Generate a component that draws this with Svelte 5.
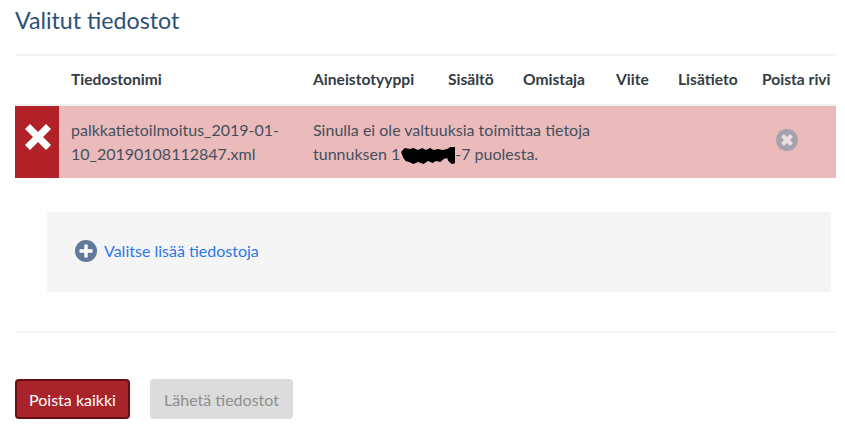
<script>
  const headers = ['', 'Tiedostonimi', 'Aineistotyyppi', 'Sisältö', 'Omistaja', 'Viite', 'Lisätieto', 'Poista rivi'];
</script>

<main class="page">
  <h2 class="title">Valitut tiedostot</h2>

  <section class="table">
    <div class="row head">
      {#each headers as h}
        <div class="th">{h}</div>
      {/each}
    </div>
    <div class="row error">
      <div class="status">
        <svg width="28" height="28" viewBox="0 0 28 28" aria-hidden="true">
          <path d="M1 6 6 1 14 9 22 1 27 6 19 14 27 22 22 27 14 19 6 27 1 22 9 14Z" fill="#fff" />
        </svg>
      </div>
      <div class="td">palkkatietoilmoitus_2019-01-10_20190108112847.xml</div>
      <div class="td message">
        Sinulla ei ole valtuuksia toimittaa tietoja<br />
        tunnuksen 1<span class="redact"><svg width="55" height="20" viewBox="0 0 49 20" preserveAspectRatio="none" aria-hidden="true"><path d="M1 7 4 3l5 1 3-1 4 2 4-2 3 2 4-2 3 2 4-1 4 1 4-1 3-2 5 0 1 4-2 3 2 4-1 5-4 1-3-3-1-3-3 1-3 3-4-1-3 2-4-2-4 3-5-2-4 2-4-2-3-1-2-3Z" fill="#000" /></svg></span>-7 puolesta.
      </div>
      <div class="remove">
        <svg width="22" height="22" viewBox="0 0 22 22" aria-hidden="true">
          <circle cx="11" cy="11" r="11" fill="#a5a2ae" />
          <path d="M6.500 6.500 15.500 15.500M15.500 6.500 6.500 15.500" stroke="#ecdfe2" stroke-width="4" />
        </svg>
      </div>
    </div>
  </section>

  <section class="drop">
    <svg width="22" height="22" viewBox="0 0 22 22" aria-hidden="true">
      <circle cx="11" cy="11" r="11" fill="#5f7a9a" />
      <path d="M11 4.500v13M4.500 11h13" stroke="#fff" stroke-width="3.400" />
    </svg>
    <a href="#add" class="add">Valitse lisää tiedostoja</a>
  </section>

  <hr class="rule" />

  <div class="actions">
    <button class="btn danger">Poista kaikki</button>
    <button class="btn disabled" disabled>Lähetä tiedostot</button>
  </div>
</main>

<style>
  :global(body) {
    margin: 0;
    background: #fff;
  }
  .page {
    width: 821px;
    padding: 0 9px 0 15px;
    font-family: Lato, "Open Sans", sans-serif;
    font-size: 16px;
    color: #3b4a56;
  }
  .title {
    margin: 0;
    padding-top: 6px;
    height: 54px;
    box-sizing: border-box;
    font-size: 23.2px;
    line-height: 28px;
    font-weight: 400;
    color: #2c5078;
  }
  .table {
    border-top: 2px solid #f3f3f3;
  }
  .row {
    display: grid;
    grid-template-columns: 44px 242px 135px 75px 93px 62px 84px 86px;
  }
  .head {
    height: 48px;
    align-items: center;
    border-bottom: 2px solid #f0f0f0;
    box-sizing: content-box;
    font-weight: 700;
    color: #333b44;
  }
  .th {
    padding: 0 0 2px 12px;
    white-space: nowrap;
    font-size: 15.6px;
  }
  .th:first-child {
    padding: 0;
  }
  .error {
    height: 72px;
    background: #ebbbbc;
    grid-template-columns: 44px 242px 449px 86px;
    align-items: center;
  }
  .status {
    background: #b12228;
    height: 100%;
    display: flex;
    align-items: center;
    justify-content: center;
    padding: 0 0 10px 1px;
    box-sizing: border-box;
  }
  .td {
    padding-left: 12px;
    line-height: 24px;
    overflow-wrap: anywhere;
    color: #454f5c;
  }
  .redact {
    display: inline-block;
    width: 55px;
    height: 20px;
    vertical-align: -5px;
  }
  .redact svg {
    display: block;
  }
  .remove {
    display: flex;
    padding: 0 0 4px 26px;
  }
  .drop {
    margin: 34px 5px 0 32px;
    height: 80px;
    box-sizing: border-box;
    background: #f5f5f6;
    display: flex;
    align-items: center;
    gap: 7px;
    padding: 0 0 2px 28px;
  }
  .add {
    color: #2a78e8;
    text-decoration: none;
    font-size: 16px;
    padding-bottom: 1px;
  }
  .rule {
    margin: 39px 0 0;
    border: 0;
    height: 2px;
    background: #f3f3f3;
  }
  .actions {
    display: flex;
    gap: 20px;
    margin-top: 46px;
  }
  .btn {
    height: 40px;
    border-radius: 4px;
    font-family: inherit;
    font-size: 16px;
    padding: 0;
  }
  .danger {
    width: 115px;
    background: #a9232a;
    border: 2px solid #661014;
    color: #fff;
  }
  .disabled {
    width: 143px;
    background: #dcdcdc;
    border: 0;
    color: #8e8e8e;
  }
</style>
